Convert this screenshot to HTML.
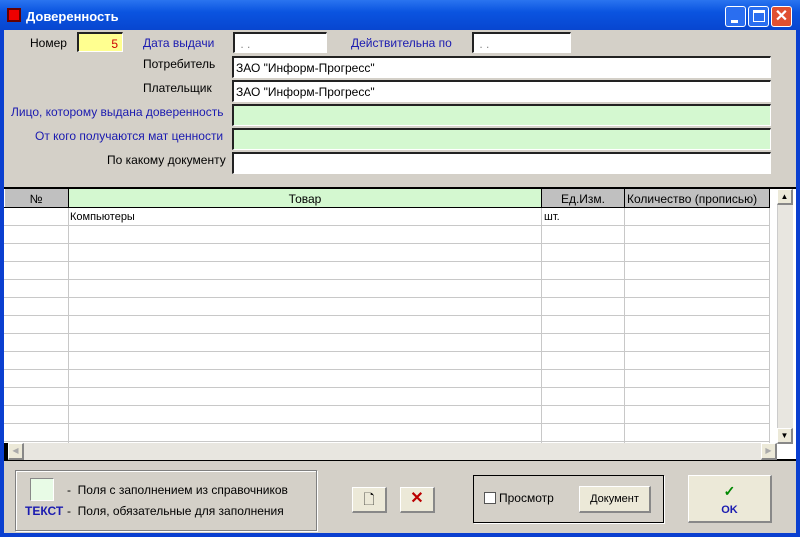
<!DOCTYPE html>
<html><head><meta charset="utf-8"><style>
*{box-sizing:border-box;margin:0;padding:0}
body{width:800px;height:537px;position:relative;overflow:hidden;background:#0a3fd0;font-family:"Liberation Sans",sans-serif;font-size:11px}
.a{position:absolute}
.lbl{position:absolute;font-size:12px;white-space:nowrap}
.blue{color:#1a1ab0}
.fld{position:absolute;background:#fff;border-top:2px solid #222;border-left:2px solid #222;border-right:1px solid #fff;border-bottom:1px solid #fff;font-size:12px;padding:3px 2px}
.g{background:#d4f8d0}
.btn{position:absolute;background:#ece9d8;border:1px solid #fff;border-right:2px solid #888;border-bottom:2px solid #888;text-align:center}
</style></head><body>
<div class="a" style="left:0;top:0;width:800px;height:30px;background:linear-gradient(#2a74f0,#0a54e0 40%,#0846d0)"></div>
<div class="a" style="left:7px;top:8px;width:14px;height:14px;background:#e00;border:2px solid #600"></div>
<div class="lbl" style="left:26px;top:9px;color:#fff;font-weight:bold;font-size:13px">Доверенность</div>
<div class="a" style="left:725px;top:6px;width:21px;height:21px;background:#2a6ef0;border:1px solid #fff;border-radius:3px"><div class="a" style="left:5px;top:13px;width:7px;height:3px;background:#fff"></div></div>
<div class="a" style="left:748px;top:6px;width:21px;height:21px;background:#2a6ef0;border:1px solid #fff;border-radius:3px"><div class="a" style="left:4px;top:3px;width:12px;height:12px;border:1px solid #fff;border-top:3px solid #fff"></div></div>
<div class="a" style="left:771px;top:6px;width:21px;height:21px;background:#e05030;border:1px solid #fff;border-radius:3px;color:#fff;font-size:16px;font-weight:bold;text-align:center;line-height:19px">✕</div>
<div class="a" style="left:4px;top:30px;width:792px;height:503px;background:#d4d0c8"></div>

<div class="lbl" style="left:30px;top:36px">Номер</div>
<div class="fld" style="left:77px;top:32px;width:46px;height:20px;background:#ffff90;color:#c00;text-align:right;padding-right:4px">5</div>
<div class="lbl blue" style="left:143px;top:36px">Дата выдачи</div>
<div class="fld" style="left:233px;top:32px;width:94px;height:21px;color:#888">&nbsp;. .</div>
<div class="lbl blue" style="left:351px;top:36px">Действительна по</div>
<div class="fld" style="left:472px;top:32px;width:99px;height:21px;color:#888">&nbsp;. .</div>
<div class="lbl" style="left:143px;top:57px">Потребитель</div>
<div class="fld" style="left:232px;top:56px;width:539px;height:22px">ЗАО "Информ-Прогресс"</div>
<div class="lbl" style="left:143px;top:81px">Плательщик</div>
<div class="fld" style="left:232px;top:80px;width:539px;height:22px">ЗАО "Информ-Прогресс"</div>
<div class="lbl blue" style="left:11px;top:105px">Лицо, которому выдана доверенность</div>
<div class="fld g" style="left:232px;top:104px;width:539px;height:22px"></div>
<div class="lbl blue" style="left:35px;top:129px">От кого получаются мат ценности</div>
<div class="fld g" style="left:232px;top:128px;width:539px;height:22px"></div>
<div class="lbl" style="left:107px;top:153px">По какому документу</div>
<div class="fld" style="left:232px;top:152px;width:539px;height:22px"></div>

<div class="a" style="left:4px;top:187px;width:792px;height:274px;background:#fff;border-top:2px solid #000;border-bottom:2px solid #000"></div>
<svg class="a" style="left:4px;top:189px" width="766" height="254">
<rect x="1" y="0" width="64" height="18" fill="#c0c0c0"/>
<rect x="65" y="0" width="472" height="18" fill="#d4f8d0"/>
<rect x="538" y="0" width="82" height="18" fill="#c0c0c0"/>
<rect x="621" y="0" width="145" height="18" fill="#c0c0c0"/>
<g stroke="#c8c8c8">
<line x1="0" y1="36.5" x2="766" y2="36.5"/><line x1="0" y1="54.5" x2="766" y2="54.5"/><line x1="0" y1="72.5" x2="766" y2="72.5"/><line x1="0" y1="90.5" x2="766" y2="90.5"/><line x1="0" y1="108.5" x2="766" y2="108.5"/><line x1="0" y1="126.5" x2="766" y2="126.5"/><line x1="0" y1="144.5" x2="766" y2="144.5"/><line x1="0" y1="162.5" x2="766" y2="162.5"/><line x1="0" y1="180.5" x2="766" y2="180.5"/><line x1="0" y1="198.5" x2="766" y2="198.5"/><line x1="0" y1="216.5" x2="766" y2="216.5"/><line x1="0" y1="234.5" x2="766" y2="234.5"/><line x1="0" y1="252.5" x2="766" y2="252.5"/>
<line x1="64.5" y1="18" x2="64.5" y2="254"/><line x1="537.5" y1="18" x2="537.5" y2="254"/><line x1="620.5" y1="18" x2="620.5" y2="254"/><line x1="765.5" y1="18" x2="765.5" y2="254"/>
</g>
<g stroke="#000"><line x1="0" y1="18.5" x2="766" y2="18.5"/><line x1="64.5" y1="0" x2="64.5" y2="18"/><line x1="537.5" y1="0" x2="537.5" y2="18"/><line x1="620.5" y1="0" x2="620.5" y2="18"/><line x1="765.5" y1="0" x2="765.5" y2="18"/></g>
<g font-family="Liberation Sans" font-size="12">
<text x="32" y="14" text-anchor="middle">№</text>
<text x="301" y="14" text-anchor="middle">Товар</text>
<text x="579" y="14" text-anchor="middle">Ед.Изм.</text>
<text x="623" y="14">Количество (прописью)</text>
<text x="66" y="31" font-size="11">Компьютеры</text>
<text x="540" y="31" font-size="11">шт.</text>
</g></svg>
<div class="a" style="left:777px;top:189px;width:16px;height:254px;background:#e8e6e0;border-left:1px solid #ccc"></div>
<div class="btn" style="left:777px;top:189px;width:16px;height:16px;font-size:8px;line-height:13px">▲</div>
<div class="btn" style="left:777px;top:428px;width:16px;height:16px;font-size:8px;line-height:13px">▼</div>
<div class="a" style="left:4px;top:443px;width:4px;height:18px;background:#000"></div>
<div class="a" style="left:8px;top:443px;width:769px;height:17px;background:#e8e6e0"></div>
<div class="btn" style="left:8px;top:443px;width:16px;height:17px;color:#aaa;font-size:8px;line-height:14px">◀</div>
<div class="btn" style="left:761px;top:443px;width:16px;height:17px;color:#aaa;font-size:8px;line-height:14px">▶</div>

<div class="a" style="left:15px;top:470px;width:302px;height:61px;border:1px solid #808080;box-shadow:1px 1px 0 #fff inset,1px 1px 0 #fff"></div>
<div class="a" style="left:30px;top:478px;width:24px;height:23px;background:#e8fbe6;border:1px solid #888;border-right-color:#fff;border-bottom-color:#fff"></div>
<div class="lbl" style="left:67px;top:483px;font-size:12px">-&nbsp; Поля с заполнением из справочников</div>
<div class="lbl" style="left:25px;top:504px;font-size:12px;color:#1a1ab0;font-weight:bold">ТЕКСТ</div>
<div class="lbl" style="left:67px;top:504px;font-size:12px">-&nbsp; Поля, обязательные для заполнения</div>
<div class="btn" style="left:352px;top:487px;width:35px;height:26px;font-size:14px;line-height:22px">🗋</div>
<div class="btn" style="left:400px;top:487px;width:35px;height:26px;color:#b00;font-size:16px;font-weight:bold;line-height:22px">✕</div>
<div class="a" style="left:473px;top:475px;width:191px;height:48px;border:1px solid #000;box-shadow:1px 1px 0 #fff"></div>
<div class="a" style="left:484px;top:492px;width:12px;height:12px;background:#fff;border:1px solid #555"></div>
<div class="lbl" style="left:499px;top:491px;font-size:12px">Просмотр</div>
<div class="btn" style="left:579px;top:486px;width:72px;height:27px;font-size:11px;line-height:24px">Документ</div>
<div class="btn" style="left:688px;top:475px;width:84px;height:48px;font-size:11px;font-weight:bold;color:#1a1ab0;padding-top:7px;line-height:17px"><span style="color:#080;font-size:14px">✓</span><br>OK</div>
</body></html>
